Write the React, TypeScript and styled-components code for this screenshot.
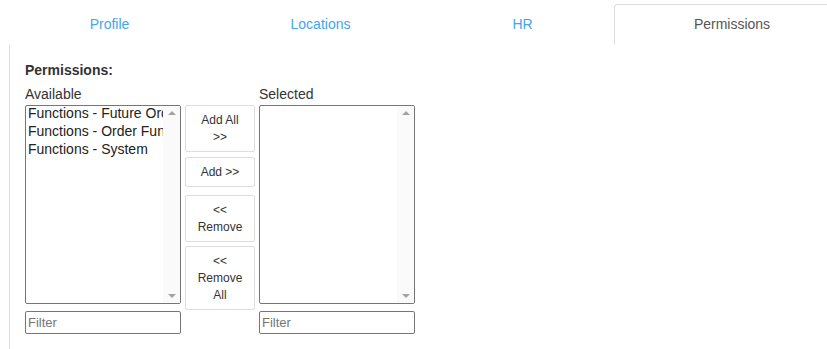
import styled, { createGlobalStyle } from "styled-components";

const GlobalStyle = createGlobalStyle`
  html, body {
    margin: 0;
    padding: 0;
    background: #fff;
    overflow: hidden;
  }
  body {
    font-family: "Liberation Sans", Arial, sans-serif;
    color: #333;
  }
`;

const Page = styled.div`
  width: 850px;
  padding: 4px 0 0 9px;
`;

const TabBar = styled.ul`
  display: flex;
  margin: 0;
  padding: 0;
  list-style: none;
  border-bottom: 1px solid #ddd;
`;

const Tab = styled.li<{ $width: number; $active?: boolean }>`
  width: ${(p) => p.$width}px;
  height: 41px;
  box-sizing: border-box;
  display: flex;
  align-items: center;
  justify-content: center;
  padding-bottom: 2px;
  font-size: 14px;
  color: ${(p) => (p.$active ? "#555" : "#42a5f5")};
  background: #fff;
  margin-bottom: -1px;
  border: 1px solid ${(p) => (p.$active ? "#ddd" : "transparent")};
  border-bottom-color: transparent;
  border-radius: 4px 4px 0 0;
  cursor: pointer;
`;

const Panel = styled.div`
  border-left: 1px solid #ddd;
  padding: 15px;
  height: 304px;
  box-sizing: border-box;
`;

const Heading = styled.div`
  font-size: 14px;
  font-weight: bold;
  line-height: 20px;
  color: #333;
  margin-bottom: 4px;
`;

const Picker = styled.div`
  display: flex;
  gap: 4px;
  align-items: flex-start;
`;

const Side = styled.div`
  display: flex;
  flex-direction: column;
  width: 156px;
`;

const Label = styled.div`
  font-size: 14px;
  line-height: 20px;
  height: 21px;
  color: #333;
`;

const ListBox = styled.div`
  height: 199px;
  box-sizing: border-box;
  border: 1px solid #767676;
  border-radius: 2px;
  display: flex;
  overflow: hidden;
`;

const Options = styled.div`
  flex: 1;
  overflow: hidden;
  margin-top: -2px;
  padding-left: 2px;
`;

const Option = styled.div`
  font-size: 14px;
  line-height: 18px;
  color: #222;
  white-space: nowrap;
  overflow: hidden;
`;

const Track = styled.div`
  width: 17px;
  background: #fafafa;
  display: flex;
  flex-direction: column;
  justify-content: space-between;
  align-items: center;
  padding: 5px 0;
`;

const Arrow = styled.div<{ $down?: boolean }>`
  width: 0;
  height: 0;
  border-left: 4px solid transparent;
  border-right: 4px solid transparent;
  ${(p) =>
    p.$down
      ? "border-top: 4px solid #a3a3a3;"
      : "border-bottom: 4px solid #a3a3a3;"}
`;

const FilterInput = styled.input`
  margin-top: 7px;
  height: 23px;
  box-sizing: border-box;
  width: 156px;
  border: 1px solid #767676;
  border-radius: 2px;
  padding: 1px 2px;
  font-family: "Liberation Sans", Arial, sans-serif;
  font-size: 13px;
  color: #333;
  &::placeholder {
    color: #757575;
  }
`;

const Buttons = styled.div`
  width: 70px;
  margin-top: 21px;
  display: flex;
  flex-direction: column;
`;

const MoveButton = styled.button<{ $gap: number }>`
  margin-top: ${(p) => p.$gap}px;
  width: 70px;
  box-sizing: border-box;
  border: 1px solid #ddd;
  border-radius: 2px;
  background: #fff;
  padding: 6px 4px 5px;
  font-family: "Liberation Sans", Arial, sans-serif;
  font-size: 12px;
  line-height: 17px;
  color: #333;
  text-align: center;
`;

function List({ items }: { items: string[] }) {
  return (
    <ListBox>
      <Options>
        {items.map((it) => (
          <Option key={it}>{it}</Option>
        ))}
      </Options>
      <Track>
        <Arrow />
        <Arrow $down />
      </Track>
    </ListBox>
  );
}

export default function App() {
  return (
    <Page>
      <GlobalStyle />
      <TabBar>
        <Tab $width={201}>Profile</Tab>
        <Tab $width={221}>Locations</Tab>
        <Tab $width={183}>HR</Tab>
        <Tab $width={236} $active>
          Permissions
        </Tab>
      </TabBar>
      <Panel>
        <Heading>Permissions:</Heading>
        <Picker>
          <Side>
            <Label>Available</Label>
            <List
              items={[
                "Functions - Future Orders",
                "Functions - Order Functions",
                "Functions - System",
              ]}
            />
            <FilterInput placeholder="Filter" />
          </Side>
          <Buttons>
            <MoveButton $gap={0}>
              Add All
              <br />
              &gt;&gt;
            </MoveButton>
            <MoveButton $gap={5}>Add &gt;&gt;</MoveButton>
            <MoveButton $gap={8}>
              &lt;&lt;
              <br />
              Remove
            </MoveButton>
            <MoveButton $gap={4}>
              &lt;&lt;
              <br />
              Remove
              <br />
              All
            </MoveButton>
          </Buttons>
          <Side>
            <Label>Selected</Label>
            <List items={[]} />
            <FilterInput placeholder="Filter" />
          </Side>
        </Picker>
      </Panel>
    </Page>
  );
}
